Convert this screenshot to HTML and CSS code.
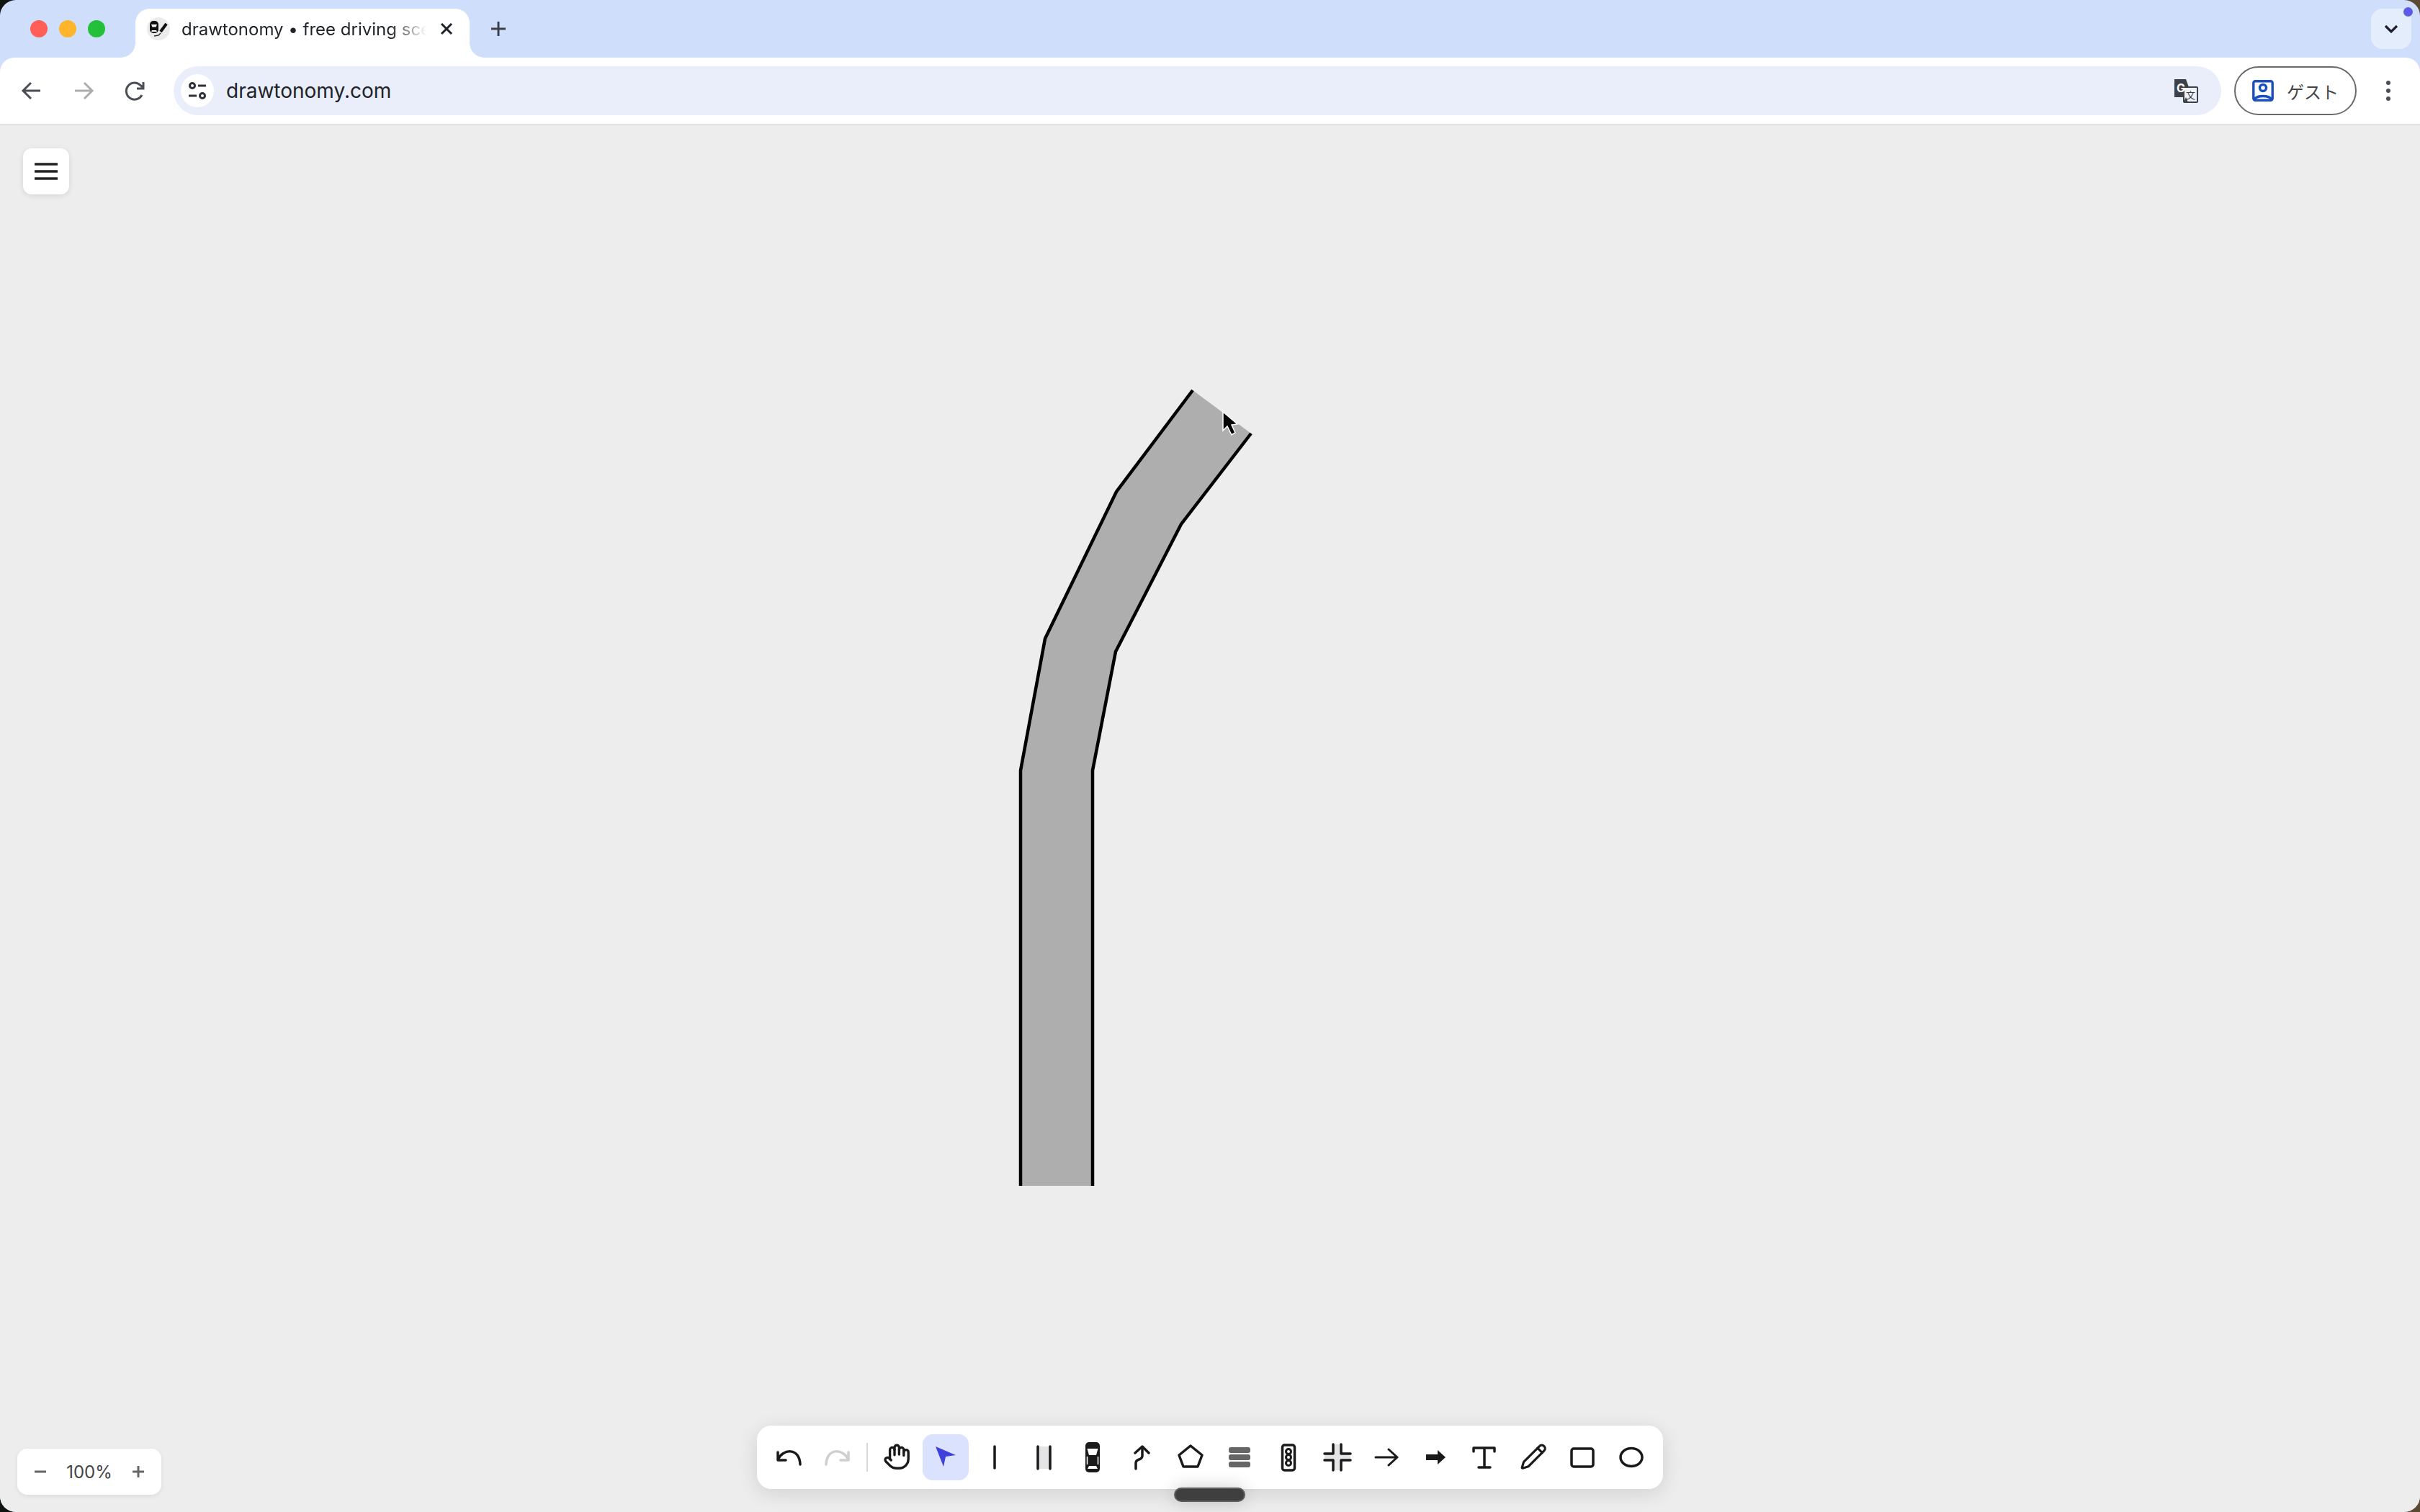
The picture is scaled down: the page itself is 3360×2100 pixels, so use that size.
FILE: index.html
```html
<!DOCTYPE html>
<html lang="en">
<head>
    <meta charset="UTF-8">
    <meta name="viewport" content="width=device-width, initial-scale=1.0">
    <title>drawtonomy</title>
    <link rel="stylesheet" href="styles.css">
</head>
<body>
    <div class="window">
        <div class="tab-strip">
            <div class="lights">
                <span class="light red"></span>
                <span class="light yellow"></span>
                <span class="light green"></span>
            </div>
            <div class="tab">
                <svg class="favicon" width="32" height="32" viewBox="0 0 32 32">
                    <circle cx="16" cy="16" r="16" fill="#ececec"/>
                    <rect x="4" y="5" width="12" height="17" rx="5" fill="#111"/>
                    <path d="M6 10h8l-1.500 3.500h-5zM7 18h6l1 2H6z" fill="#fff"/>
                    <path d="M19 20 27 9" stroke="#111" stroke-width="4" fill="none"/>
                    <path d="M10 26l6-1 3-3" stroke="#333" stroke-width="1.500" fill="none"/>
                </svg>
                <span class="tab-title">drawtonomy • free driving sce</span>
                <svg class="tab-close" width="24" height="24" viewBox="0 0 24 24">
                    <path d="M5 5 19 19M19 5 5 19" stroke="#1f2329" stroke-width="3" fill="none"/>
                </svg>
            </div>
            <svg class="new-tab" width="24" height="24" viewBox="0 0 24 24">
                <path d="M12 2V22M2 12H22" stroke="#3c4148" stroke-width="3" fill="none"/>
            </svg>
            <div class="tab-search">
                <svg width="24" height="24" viewBox="0 0 24 24">
                    <path d="M4 8l8 8 8-8" stroke="#1a1f2b" stroke-width="3.200" fill="none"/>
                </svg>
                <span class="tab-dot"></span>
            </div>
        </div>

        <div class="toolbar">
            <button class="nav-btn">
                <svg width="36" height="36" viewBox="0 0 36 36" class="nav-icon">
                    <path d="M30 18H7M17 7 6 18l11 11"/>
                </svg>
            </button>
            <button class="nav-btn off">
                <svg width="36" height="36" viewBox="0 0 36 36" class="nav-icon">
                    <path d="M6 18H29M19 7l11 11-11 11"/>
                </svg>
            </button>
            <button class="nav-btn">
                <svg width="36" height="36" viewBox="0 0 36 36" class="nav-icon">
                    <path d="M27 24A11.500 11.500 0 1 1 25 10.500L29 14M29 6v9h-9"/>
                </svg>
            </button>
            <div class="omnibox">
                <span class="site-btn">
                    <svg width="28" height="28" viewBox="0 0 28 28" class="site-icon">
                        <circle cx="7" cy="7" r="3.500"/>
                        <path d="M15 7H26M2 21H13"/>
                        <circle cx="21" cy="21" r="3.500"/>
                    </svg>
                </span>
                <span class="url">drawtonomy.com</span>
                <svg class="translate" width="34" height="34" viewBox="0 0 34 34">
                    <path d="M1 1H17L26 26H1Z" fill="#3c4148"/>
                    <rect x="14" y="12" width="19" height="21" rx="1" fill="#eef1f8" stroke="#3c4148" stroke-width="2"/>
                    <path d="M17 26 20 33H14Z" fill="#3c4148"/>
                    <text x="4" y="19" class="translate-g">G</text>
                    <text x="17" y="28" class="translate-k">文</text>
                </svg>
            </div>
            <div class="guest">
                <svg width="30" height="30" viewBox="0 0 30 30" class="guest-icon">
                    <rect x="1.800" y="1.800" width="26.400" height="26.400" rx="2.500"/>
                    <circle cx="15" cy="11" r="4.500"/>
                    <path d="M3 27C7 21 23 21 27 27"/>
                </svg>
                <span>ゲスト</span>
            </div>
            <button class="nav-btn">
                <svg width="8" height="30" viewBox="0 0 8 30" class="dots">
                    <circle cx="4" cy="4" r="3"/>
                    <circle cx="4" cy="15" r="3"/>
                    <circle cx="4" cy="26" r="3"/>
                </svg>
            </button>
        </div>

        <div class="canvas">
            <!-- viewBox uses page coordinates, canvas starts at y=174 -->
            <svg class="drawing" viewBox="0 174 3360 1926">
                <polygon class="road-fill" points="1417,1647 1417,1070 1451,887 1550,683 1656,542 1737,602 1640,728 1549,905 1517,1070 1517,1647"/>
                <polyline class="road-edge" points="1417,1647 1417,1070 1451,887 1550,683 1656,542"/>
                <polyline class="road-edge" points="1517,1647 1517,1070 1549,905 1640,728 1737,602"/>
                <polygon class="cursor" points="1698,572 1698,598 1704,592 1710,604 1715,601 1710,590 1718,589"/>
            </svg>

            <button class="menu-btn">
                <svg width="32" height="24" viewBox="0 0 32 24">
                    <path d="M1 2H31M1 12H31M1 22H31" stroke="#222" stroke-width="3.600" stroke-linecap="round"/>
                </svg>
            </button>

            <div class="zoom-box">
                <button class="zoom-btn">
                    <svg width="20" height="20" viewBox="0 0 20 20"><path d="M2 10H18" stroke="#666" stroke-width="3"/></svg>
                </button>
                <span class="zoom-value">100%</span>
                <button class="zoom-btn">
                    <svg width="20" height="20" viewBox="0 0 20 20"><path d="M2 10H18M10 2V18" stroke="#666" stroke-width="3"/></svg>
                </button>
            </div>

            <div class="tools">
                <button class="tool">
                    <svg class="icon" viewBox="-32 -32 64 64"><path d="M-15 -7V4H-4M-15 3C-8 -12 15 -14 16 10"/></svg>
                </button>
                <button class="tool muted">
                    <svg class="icon" viewBox="-32 -32 64 64"><path d="M15 -7V4H4M15 3C8 -12 -15 -14 -16 10"/></svg>
                </button>
                <span class="divider"></span>
                <button class="tool">
                    <svg class="icon" viewBox="-32 -32 64 64">
                        <g transform="translate(-19 -20) scale(1.600)" stroke-width="2.100">
                            <path d="M18 11V6a2 2 0 0 0-2-2a2 2 0 0 0-2 2"/>
                            <path d="M14 10V4a2 2 0 0 0-2-2a2 2 0 0 0-2 2v2"/>
                            <path d="M10 10.500V6a2 2 0 0 0-2-2a2 2 0 0 0-2 2v8"/>
                            <path d="M18 8a2 2 0 1 1 4 0v6a8 8 0 0 1-8 8h-2c-2.800 0-4.500-.86-5.990-2.340l-3.600-3.600a2 2 0 0 1 2.830-2.820L7 15"/>
                        </g>
                    </svg>
                </button>
                <button class="tool active">
                    <svg class="icon" viewBox="-32 -32 64 64"><polygon class="solid" points="-14,-15 14,-3 0,-1 -3,13"/></svg>
                </button>
                <button class="tool">
                    <svg class="icon" viewBox="-32 -32 64 64"><path d="M0 -15V15"/></svg>
                </button>
                <button class="tool">
                    <svg class="icon" viewBox="-32 -32 64 64">
                        <rect class="lane-bg" x="-8" y="-15" width="17" height="31"/>
                        <path d="M-8 -15V16M9 -15V16"/>
                    </svg>
                </button>
                <button class="tool">
                    <svg class="icon" viewBox="-32 -32 64 64">
                        <rect class="solid" x="-10" y="-21" width="20" height="42" rx="5"/>
                        <path class="cut" d="M-7.500 -12H7.500L5 -3H-5ZM-5 12H5L7 16H-7Z"/>
                        <path class="cut-line" d="M-7.500 -1V10M7.500 -1V10"/>
                    </svg>
                </button>
                <button class="tool">
                    <svg class="icon" viewBox="-32 -32 64 64"><path d="M-8 16V8C-8 1 1 5 1 -2V-14M-9 -6 1 -15 10 -6"/></svg>
                </button>
                <button class="tool">
                    <svg class="icon" viewBox="-32 -32 64 64"><polygon points="0,-16 16,-3 10,13 -10,13 -16,-3"/></svg>
                </button>
                <button class="tool">
                    <svg class="icon" viewBox="-32 -32 64 64">
                        <rect class="lane-bar" x="-15" y="-14" width="30" height="8" rx="3"/>
                        <rect class="lane-bar" x="-15" y="-4" width="30" height="8" rx="3"/>
                        <rect class="lane-bar" x="-15" y="6" width="30" height="8" rx="3"/>
                    </svg>
                </button>
                <button class="tool">
                    <svg class="icon" viewBox="-32 -32 64 64">
                        <rect x="-8.500" y="-17" width="17" height="35" rx="3"/>
                        <g class="thin">
                            <circle cx="0" cy="-8" r="3.500"/>
                            <circle cx="0" cy="0" r="3.500"/>
                            <circle cx="0" cy="8" r="3.500"/>
                        </g>
                    </svg>
                </button>
                <button class="tool">
                    <svg class="icon" viewBox="-32 -32 64 64">
                        <path class="lane-bg" d="M-6 -18H5V-5H18V4H5V18H-6V4H-18V-5H-6Z"/>
                        <path d="M-6 -18V-5H-18M5 -18V-5H18M-6 18V4H-18M5 18V4H18"/>
                    </svg>
                </button>
                <button class="tool">
                    <svg class="icon" viewBox="-32 -32 64 64"><path class="thin" d="M-15 0H15M3 -11 15 0 3 11"/></svg>
                </button>
                <button class="tool">
                    <svg class="icon" viewBox="-32 -32 64 64"><polygon class="solid" points="-13,-4 3,-4 3,-10 14,0 3,10 3,4 -13,4"/></svg>
                </button>
                <button class="tool">
                    <svg class="icon" viewBox="-32 -32 64 64"><path d="M-15 -8V-13H14V-8M0 -13V14M-8 14H8"/></svg>
                </button>
                <button class="tool">
                    <svg class="icon" viewBox="-32 -32 64 64">
                        <g transform="translate(-19 -20) scale(1.600)" stroke-width="2">
                            <path d="M21.174 6.812a1 1 0 0 0-3.986-3.987L3.842 16.174a2 2 0 0 0-.5.83l-1.321 4.352a.5.5 0 0 0 .623.622l4.353-1.320a2 2 0 0 0 .83-.497z"/>
                            <path d="M15.500 4.500l4 4"/>
                        </g>
                    </svg>
                </button>
                <button class="tool">
                    <svg class="icon" viewBox="-32 -32 64 64"><rect x="-15" y="-12" width="30" height="25" rx="3"/></svg>
                </button>
                <button class="tool">
                    <svg class="icon" viewBox="-32 -32 64 64"><ellipse cx="0" cy="0" rx="15" ry="12.500"/></svg>
                </button>
            </div>

            <div class="grab-bar"></div>
        </div>
    </div>
</body>
</html>
```

FILE: styles.css
```css
* {
    margin: 0;
    padding: 0;
    box-sizing: border-box;
    font-family: 'Inter', 'Noto Sans CJK JP', sans-serif;
}

body {
    width: 3360px;
    height: 2100px;
    overflow: hidden;
    background: linear-gradient(90deg, #10150f, #5a4a32);
}

button {
    border: none;
    background: none;
    display: flex;
    align-items: center;
    justify-content: center;
}

.window {
    height: 100%;
    display: flex;
    flex-direction: column;
    background: #cfdefb;
    border-radius: 22px;
    overflow: hidden;
}

/* tab strip */
.tab-strip {
    height: 80px;
    display: flex;
    align-items: flex-start;
    padding-right: 12px;
}

.lights {
    display: flex;
    gap: 16px;
    margin: 28px 42px 0 42px;
}

.light {
    width: 24px;
    height: 24px;
    border-radius: 50%;
}

.red { background: #ff5f57; }
.yellow { background: #fdb52c; }
.green { background: #25c03a; }

.tab {
    position: relative;
    width: 464px;
    height: 68px;
    margin-top: 12px;
    padding: 0 20px 12px 16px;
    display: flex;
    align-items: center;
    gap: 16px;
    background: #fff;
    border-radius: 20px 20px 0 0;
}

.tab::before,
.tab::after {
    content: "";
    position: absolute;
    bottom: 0;
    width: 20px;
    height: 20px;
}

.tab::before {
    left: -20px;
    background: radial-gradient(circle at 0 0, transparent 19.500px, #fff 20px);
}

.tab::after {
    right: -20px;
    background: radial-gradient(circle at 100% 0, transparent 19.500px, #fff 20px);
}

.tab-title {
    flex: 1;
    min-width: 0;
    white-space: nowrap;
    font-size: 24px;
    color: #1f2329;
    -webkit-mask-image: linear-gradient(90deg, #000 85%, transparent 100%);
    mask-image: linear-gradient(90deg, #000 85%, transparent 100%);
}

.favicon,
.tab-close,
.new-tab {
    flex-shrink: 0;
}

.new-tab {
    margin: 28px 0 0 28px;
}

.tab-search {
    position: relative;
    width: 56px;
    height: 56px;
    margin: 12px 0 0 auto;
    display: flex;
    align-items: center;
    justify-content: center;
    background: #e4edfc;
    border-radius: 16px;
}

.tab-dot {
    position: absolute;
    top: -2px;
    right: -2px;
    width: 13px;
    height: 13px;
    border-radius: 50%;
    background: #5b5be8;
}

/* address bar */
.toolbar {
    height: 94px;
    padding: 12px;
    display: flex;
    align-items: center;
    gap: 8px;
    background: #fff;
    border-bottom: 2px solid #e2e2e2;
    border-radius: 20px 20px 0 0;
}

.nav-btn {
    width: 64px;
    height: 64px;
    flex-shrink: 0;
}

.nav-icon {
    fill: none;
    stroke: #4a4f57;
    stroke-width: 3;
}

.off .nav-icon {
    stroke: #adadad;
}

.omnibox {
    flex: 1;
    height: 68px;
    margin: 0 10px 0 13px;
    padding: 0 32px 0 10px;
    display: flex;
    align-items: center;
    gap: 17px;
    background: #e9eefa;
    border-radius: 34px;
}

.site-btn {
    width: 46px;
    height: 46px;
    display: flex;
    align-items: center;
    justify-content: center;
    background: #fff;
    border-radius: 50%;
}

.site-icon {
    fill: none;
    stroke: #2d3138;
    stroke-width: 3;
}

.url {
    font-size: 28px;
    color: #1f2329;
}

.translate {
    margin-left: auto;
}

.translate-g {
    font-size: 16px;
    font-weight: 700;
    fill: #fff;
}

.translate-k {
    font-size: 13px;
    fill: #3c4148;
}

.guest {
    width: 170px;
    height: 68px;
    margin-right: 4px;
    padding-left: 23px;
    display: flex;
    align-items: center;
    gap: 18px;
    border: 2px solid #6a6a6a;
    border-radius: 34px;
    font-size: 24px;
    color: #444;
}

.guest-icon {
    flex-shrink: 0;
    fill: none;
    stroke: #1a4fc0;
    stroke-width: 3.400;
}

.dots {
    fill: #4a4f57;
}

/* drawing area */
.canvas {
    position: relative;
    flex: 1;
    background: #ededed;
}

.drawing {
    position: absolute;
    top: 0;
    left: 0;
    width: 3360px;
    height: 1926px;
}

.road-fill {
    fill: #aeaeae;
}

.road-edge {
    fill: none;
    stroke: #000;
    stroke-width: 4.500;
}

.cursor {
    fill: #000;
    stroke: #fff;
    stroke-width: 1.500;
}

.menu-btn {
    position: absolute;
    top: 32px;
    left: 32px;
    width: 64px;
    height: 64px;
    background: #fff;
    border-radius: 12px;
    box-shadow: 0 2px 8px rgba(0, 0, 0, 0.1);
}

.zoom-box {
    position: absolute;
    left: 24px;
    bottom: 24px;
    width: 200px;
    height: 64px;
    display: flex;
    align-items: center;
    justify-content: space-between;
    background: #fff;
    border-radius: 14px;
    box-shadow: 0 2px 6px rgba(0, 0, 0, 0.08);
}

.zoom-btn {
    width: 64px;
    height: 64px;
}

.zoom-value {
    font-size: 24px;
    color: #444;
}

.tools {
    position: absolute;
    left: 1051px;
    bottom: 32px;
    height: 88px;
    padding: 12px;
    display: flex;
    align-items: center;
    gap: 4px;
    background: #fff;
    border-radius: 20px;
    box-shadow: 0 6px 28px rgba(0, 0, 0, 0.12);
}

.tool {
    width: 64px;
    height: 64px;
    border-radius: 14px;
    color: #1a1a1a;
}

.tool.muted {
    color: #cfcfcf;
}

.tool.active {
    background: #dbe2fd;
    color: #3f3fdc;
}

.divider {
    width: 2px;
    height: 40px;
    margin: 0 4px;
    background: #d8d8d8;
}

.icon {
    width: 64px;
    height: 64px;
    fill: none;
    stroke: currentColor;
    stroke-width: 3.500;
    stroke-linecap: round;
    stroke-linejoin: round;
}

.icon .solid {
    fill: currentColor;
    stroke: none;
}

.icon .thin {
    stroke-width: 3;
}

.icon .lane-bg {
    fill: #e4e4e7;
    stroke: none;
}

.icon .lane-bar {
    fill: #666;
    stroke: none;
}

.icon .cut {
    fill: #fff;
    stroke: none;
}

.icon .cut-line {
    stroke: #fff;
    stroke-width: 1.500;
    stroke-linecap: butt;
}

.grab-bar {
    position: absolute;
    left: 1630px;
    bottom: 14px;
    width: 99px;
    height: 20px;
    background: #3f3f3f;
    border: 2px solid #5c5c5c;
    border-radius: 10px;
    box-shadow: 0 0 24px rgba(0, 0, 0, 0.2);
}
```
